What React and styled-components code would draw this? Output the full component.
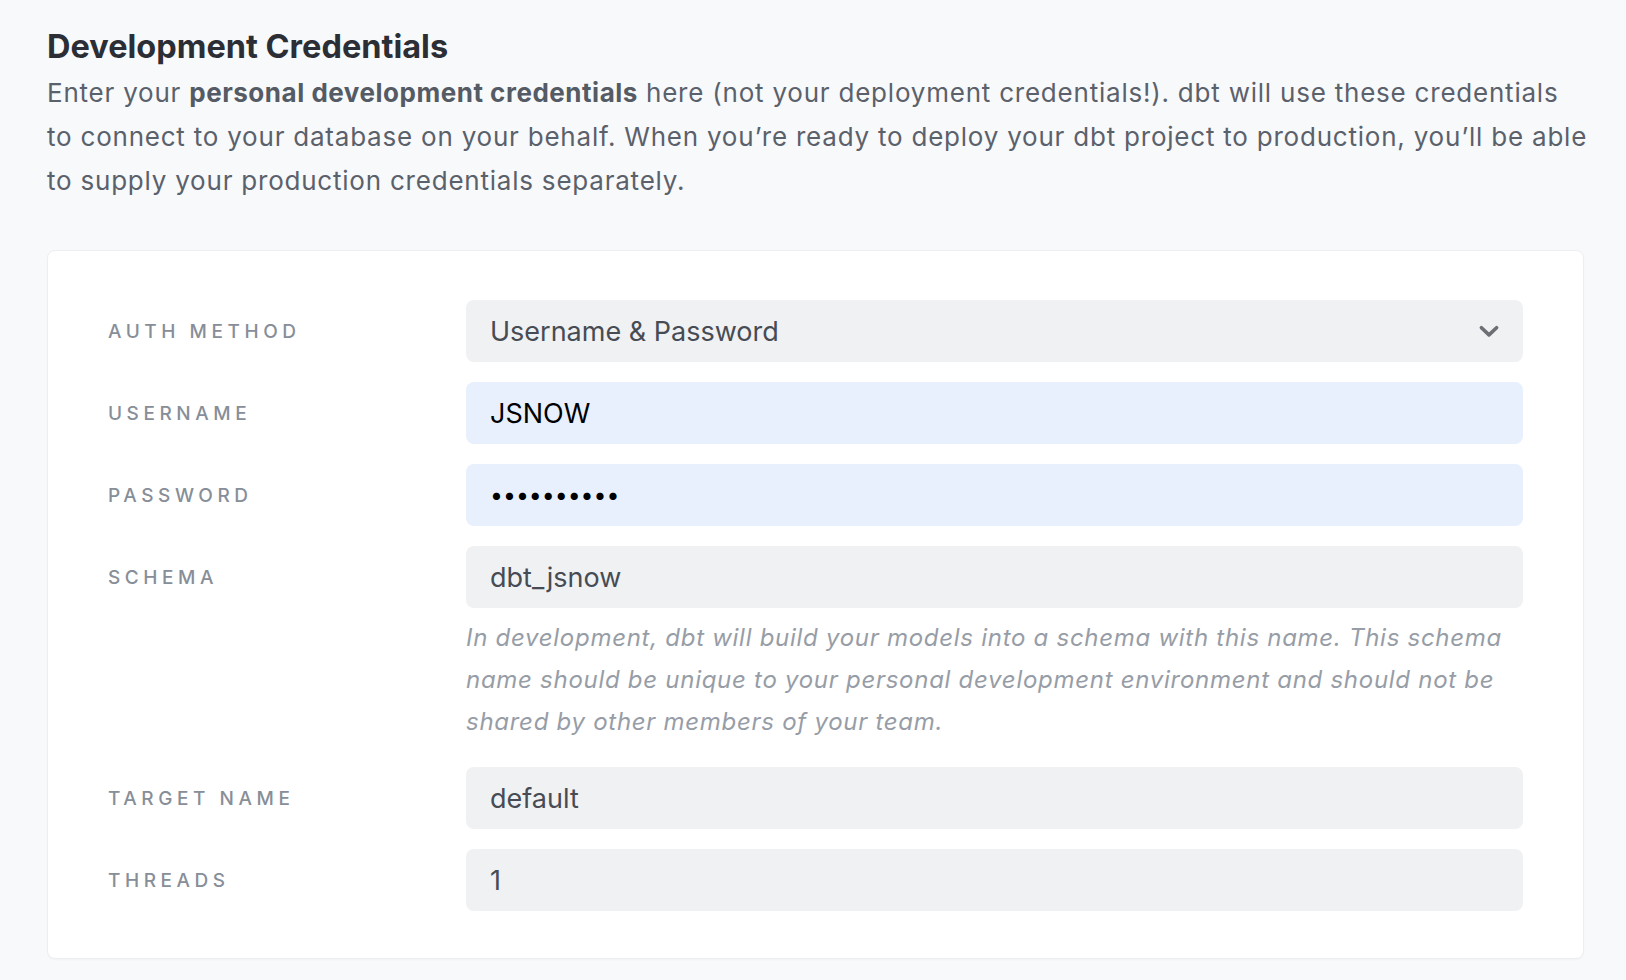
import React from 'react';
import styled, { createGlobalStyle } from 'styled-components';

const GlobalStyle = createGlobalStyle`
    html, body {
        margin: 0;
        background: #f8f9fb;
    }
    body {
        font-family: Inter, "Noto Sans", "Liberation Sans", sans-serif;
        -webkit-font-smoothing: antialiased;
    }
`

const Page = styled.div`
    padding: 26px 42px 20px 47px;
`

const Title = styled.h2`
    margin: 0;
    font-size: 32.5px;
    line-height: 42px;
    font-weight: 700;
    color: #2b2f35;
`

const Intro = styled.p`
    margin: 3px -20px 0 0;
    font-size: 26px;
    line-height: 44px;
    letter-spacing: 0.03em;
    color: #5b616b;
    b {
        font-weight: 700;
        color: #555b64;
        letter-spacing: 0.02em;
    }
`

const Card = styled.div`
    margin-top: 47px;
    background: #fff;
    border: 1px solid #eceef1;
    border-radius: 8px;
    box-shadow: 0 1px 2px rgba(0, 0, 0, 0.03);
    padding: 49px 60px 47px 60px;
    display: grid;
    grid-template-columns: 358px 1fr;
    row-gap: 20px;
`

const Label = styled.label`
    height: 62px;
    display: flex;
    align-items: center;
    font-size: 19px;
    font-weight: 500;
    letter-spacing: 0.24em;
    text-transform: uppercase;
    color: #878e98;
`

const FieldCol = styled.div`
    display: flex;
    flex-direction: column;
`

const Input = styled.input`
    box-sizing: border-box;
    width: 100%;
    height: 62px;
    border: none;
    outline: none;
    border-radius: 8px;
    padding: 0 24px;
    font-family: inherit;
    font-size: ${p => (p.type === 'password' ? '23px' : '27px')};
    background: ${p => (p.$filled ? '#e8f0fe' : '#f0f1f3')};
    color: ${p => (p.$filled ? '#000' : '#474c54')};
`

const Select = styled.div`
    box-sizing: border-box;
    height: 62px;
    border-radius: 8px;
    padding: 0 21px 0 24px;
    display: flex;
    align-items: center;
    justify-content: space-between;
    font-size: 27px;
    background: #f0f1f3;
    color: #474c54;
    svg {
        width: 26px;
        height: 26px;
    }
`

const Help = styled.p`
    margin: 9px 0 4px;
    font-size: 24px;
    line-height: 42px;
    letter-spacing: 0.03em;
    font-style: italic;
    color: #979da6;
`

const fields = [
    { label: 'Username', value: 'JSNOW', filled: true },
    { label: 'Password', value: 'dbtjsnow12', type: 'password', filled: true },
    {
        label: 'Schema',
        value: 'dbt_jsnow',
        help: 'In development, dbt will build your models into a schema with this name. This schema name should be unique to your personal development environment and should not be shared by other members of your team.',
    },
    { label: 'Target Name', value: 'default' },
    { label: 'Threads', value: '1' },
]

export default function App() {
    return (
        <Page>
            <GlobalStyle />
            <Title>Development Credentials</Title>
            <Intro>
                Enter your <b>personal development credentials</b> here (not your deployment credentials!). dbt will use these credentials<br />
                to connect to your database on your behalf. When you’re ready to deploy your dbt project to production, you’ll be able to supply your production credentials separately.
            </Intro>
            <Card>
                <Label>Auth Method</Label>
                <Select>
                    Username &amp; Password
                    <svg viewBox="0 0 24 24" fill="none" stroke="#6c6f74" strokeWidth="3.4" strokeLinecap="round" strokeLinejoin="round">
                        <polyline points="5 9 12 15.5 19 9" />
                    </svg>
                </Select>
                {fields.map(f => (
                    <React.Fragment key={f.label}>
                        <Label>{f.label}</Label>
                        <FieldCol>
                            <Input
                                readOnly
                                type={f.type || 'text'}
                                defaultValue={f.value}
                                $filled={f.filled}
                            />
                            {f.help && <Help>{f.help}</Help>}
                        </FieldCol>
                    </React.Fragment>
                ))}
            </Card>
        </Page>
    )
}
